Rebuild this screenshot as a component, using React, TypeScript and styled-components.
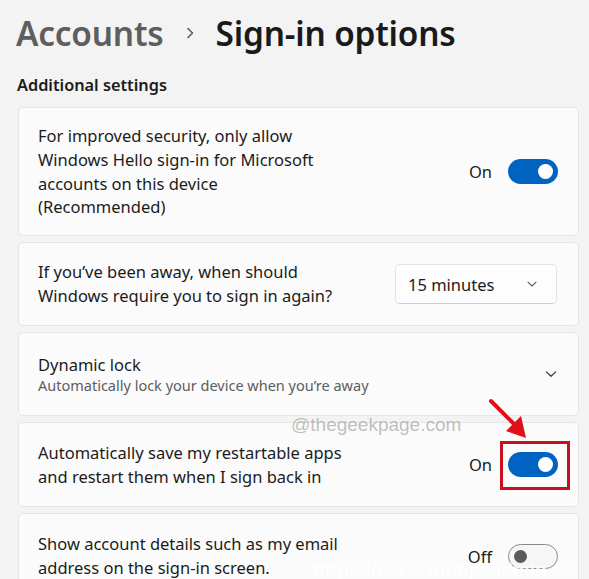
import React from "react";
import styled, { createGlobalStyle } from "styled-components";

const Global = createGlobalStyle`
  html, body { margin: 0; padding: 0; background: #f3f3f3; }
  body { font-family: "Noto Sans", "Open Sans", sans-serif; color: #1b1b1b; }
`;

const Page = styled.div`
  width: 589px;
  height: 579px;
  overflow: hidden;
  position: relative;
  background: #f3f3f3;
  padding: 0 10px 0 18px;
  box-sizing: border-box;
`;

const TitleRow = styled.div`
  display: flex;
  align-items: center;
  height: 66px;
  margin-left: -2px;
`;

const Crumb = styled.span<{ $current?: boolean }>`
  font-size: 33.4px;
  font-weight: 600;
  letter-spacing: -0.2px;
  color: ${(p) => (p.$current ? "#1a1a1a" : "#5e5e5e")};
`;

const Sep = styled.span`
  display: flex;
  width: 52px;
  justify-content: center;
  color: #5e5e5e;
`;

const SectionLabel = styled.div`
  font-size: 16.3px;
  font-weight: 600;
  color: #1b1b1b;
  margin: 8px 0 0 -1px;
  height: 33px;
`;

const List = styled.div`
  display: flex;
  flex-direction: column;
  gap: 6px;
`;

const Card = styled.div<{ $h: number }>`
  height: ${(p) => p.$h}px;
  box-sizing: border-box;
  background: #fbfbfb;
  border: 1px solid #e5e5e5;
  border-radius: 5px;
  display: flex;
  align-items: center;
  justify-content: space-between;
  padding: 0 20px 0 19px;
  position: relative;
`;

const Text = styled.div`
  font-size: 16.5px;
  line-height: 23.7px;
  color: #1b1b1b;
`;

const Sub = styled.div`
  font-size: 14.5px;
  line-height: 19px;
  color: #5d5d5d;
`;

const Control = styled.div`
  display: flex;
  align-items: center;
  gap: 16px;
`;

const StateLabel = styled.span`
  font-size: 16.5px;
  color: #1b1b1b;
`;

const Toggle = styled.div<{ $on: boolean }>`
  width: 50px;
  height: 25px;
  box-sizing: border-box;
  border-radius: 13px;
  background: ${(p) => (p.$on ? "#0063c1" : "#f6f6f6")};
  border: ${(p) => (p.$on ? "none" : "1px solid #8a8a8a")};
  display: flex;
  align-items: center;
  justify-content: ${(p) => (p.$on ? "flex-end" : "flex-start")};
  padding: 0 5px;
`;

const Knob = styled.div<{ $on: boolean }>`
  width: ${(p) => (p.$on ? 15 : 13)}px;
  height: ${(p) => (p.$on ? 15 : 13)}px;
  border-radius: 50%;
  background: ${(p) => (p.$on ? "#ffffff" : "#5a5a5a")};
`;

const Select = styled.div`
  width: 162px;
  height: 40px;
  box-sizing: border-box;
  border: 1px solid #e3e3e3;
  border-bottom-color: #d0d0d0;
  border-radius: 5px;
  background: #fdfdfd;
  display: flex;
  align-items: center;
  justify-content: space-between;
  padding: 0 18px 0 12px;
  font-size: 16.5px;
  margin-right: 1px;
`;

const Highlight = styled.div`
  position: absolute;
  right: 8px;
  top: 18px;
  width: 70px;
  height: 49px;
  box-sizing: border-box;
  border: 3px solid #c8101d;
`;

const Watermark = styled.div`
  position: absolute;
  left: 291px;
  top: 414px;
  font-size: 19px;
  color: rgba(150, 150, 150, 0.6);
  font-family: "Liberation Sans", Arial, sans-serif;
`;

const Watermark2 = styled.div`
  position: absolute;
  left: 313px;
  top: 559px;
  font-size: 19px;
  font-weight: 700;
  color: rgba(255, 255, 255, 0.85);
  font-family: "Liberation Sans", Arial, sans-serif;
  white-space: nowrap;
`;

const Arrow = styled.svg`
  position: absolute;
  left: 488px;
  top: 398px;
`;

const Chevron = ({ size = 12, color = "#5d5d5d" }: { size?: number; color?: string }) => (
  <svg width={size} height={size} viewBox="0 0 12 12" fill="none">
    <path d="M2 4.2 L6 8 L10 4.2" stroke={color} strokeWidth="1.1" strokeLinecap="round" strokeLinejoin="round" />
  </svg>
);

const Sw = ({ on }: { on: boolean }) => (
  <Toggle $on={on}>
    <Knob $on={on} />
  </Toggle>
);

export default function App() {
  return (
    <Page>
      <Global />
      <TitleRow>
        <Crumb>Accounts</Crumb>
        <Sep>
          <svg width="10" height="14" viewBox="0 0 10 14" fill="none">
            <path d="M3 2.5 L7.5 7 L3 11.5" stroke="#5e5e5e" strokeWidth="1.6" strokeLinecap="round" strokeLinejoin="round" />
          </svg>
        </Sep>
        <Crumb $current>Sign-in options</Crumb>
      </TitleRow>
      <SectionLabel>Additional settings</SectionLabel>
      <List>
        <Card $h={129}>
          <Text>
            For improved security, only allow
            <br />
            Windows Hello sign-in for Microsoft
            <br />
            accounts on this device
            <br />
            (Recommended)
          </Text>
          <Control>
            <StateLabel>On</StateLabel>
            <Sw on />
          </Control>
        </Card>
        <Card $h={84}>
          <Text>
            If you’ve been away, when should
            <br />
            Windows require you to sign in again?
          </Text>
          <Select>
            <span>15 minutes</span>
            <Chevron />
          </Select>
        </Card>
        <Card $h={84}>
          <div>
            <Text>Dynamic lock</Text>
            <Sub>Automatically lock your device when you’re away</Sub>
          </div>
          <Chevron size={14} color="#3a3a3a" />
        </Card>
        <Card $h={85}>
          <Text>
            Automatically save my restartable apps
            <br />
            and restart them when I sign back in
          </Text>
          <Control>
            <StateLabel>On</StateLabel>
            <Sw on />
          </Control>
          <Highlight />
        </Card>
        <Card $h={86}>
          <Text>
            Show account details such as my email
            <br />
            address on the sign-in screen.
          </Text>
          <Control>
            <StateLabel>Off</StateLabel>
            <Sw on={false} />
          </Control>
        </Card>
      </List>
      <Watermark>@thegeekpage.com</Watermark>
      <Watermark2>https://www.wintipsadmin.cc</Watermark2>
      <Arrow width="44" height="44" viewBox="0 0 44 44">
        <line x1="3" y1="3" x2="28" y2="28" stroke="#e0101a" strokeWidth="4" strokeLinecap="round" />
        <polygon points="38,40 18,33 33,18" fill="#e0101a" />
      </Arrow>
    </Page>
  );
}
